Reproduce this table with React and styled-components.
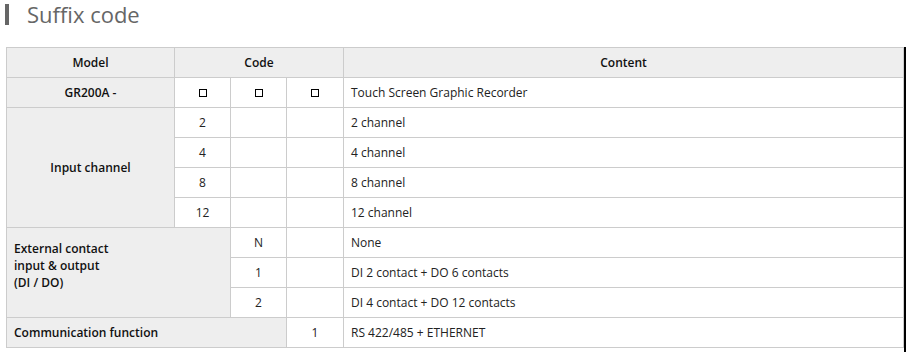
import React from "react";
import styled, { createGlobalStyle } from "styled-components";

const Global = createGlobalStyle`
  html, body { margin: 0; padding: 0; background: #fff; }
  body { font-family: "Open Sans", "Noto Sans", sans-serif; }
`;

const Page = styled.div`
  width: 914px;
  height: 352px;
  overflow: hidden;
  box-sizing: border-box;
  padding: 0 0 0 6px;
`;

const Title = styled.h2`
  margin: 0 0 0 -1px;
  height: 47px;
  box-sizing: border-box;
  display: flex;
  align-items: flex-start;
  gap: 18px;
  font-family: "Open Sans", sans-serif;
  font-weight: 500;
  font-size: 22px;
  line-height: 29px;
  color: #666;
`;

const TitleBar = styled.span`
  display: block;
  flex: 0 0 4px;
  width: 4px;
  height: 21px;
  margin-top: 4px;
  background: #666;
`;

const Frame = styled.div`
  width: 900px;
  height: 305px;
  box-sizing: border-box;
  border-right: 2px solid #000;
`;

const Table = styled.table`
  width: 898px;
  border-collapse: collapse;
  table-layout: fixed;
  font-family: "Open Sans", sans-serif;
  font-size: 12px;
  color: #222;
  border-top: 1px solid #ccc;
`;

const Cell = styled.td`
  height: 30px;
  box-sizing: border-box;
  border: 1px solid #ccc;
  padding: 0;
  padding-left: ${(p) => (p.$left ? "7px" : "0")};
  text-align: ${(p) => (p.$left ? "left" : "center")};
  vertical-align: middle;
  background: ${(p) => (p.$gray ? "#eeeeee" : "#fff")};
  font-weight: ${(p) => (p.$bold ? 600 : 400)};
  color: ${(p) => (p.$bold ? "#111" : "#222")};
  line-height: ${(p) => (p.$tall ? "17px" : "16px")};
`;

const Head = styled(Cell).attrs({ as: "th" })`
  background: #eeeeee;
  font-weight: 600;
  color: #111;
`;

const Box = styled.span`
  display: inline-block;
  width: 8px;
  height: 8px;
  box-sizing: border-box;
  border: 1px solid #000;
  vertical-align: middle;
`;

const Top = styled.span`
  display: block;
  padding-bottom: 15px;
`;

export default function App() {
  return (
    <>
      <Global />
      <Page>
        <Title>
          <TitleBar />
          Suffix code
        </Title>
        <Frame>
          <Table>
            <colgroup>
              <col style={{ width: 168 }} />
              <col style={{ width: 56 }} />
              <col style={{ width: 56 }} />
              <col style={{ width: 57 }} />
              <col />
            </colgroup>
            <thead>
              <tr>
                <Head>Model</Head>
                <Head colSpan={3}>Code</Head>
                <Head>Content</Head>
              </tr>
            </thead>
            <tbody>
              <tr>
                <Cell $gray $bold>GR200A -</Cell>
                <Cell><Box aria-label="□" /></Cell>
                <Cell><Box aria-label="□" /></Cell>
                <Cell><Box aria-label="□" /></Cell>
                <Cell $left>Touch Screen Graphic Recorder</Cell>
              </tr>
              <tr>
                <Cell $gray $bold rowSpan={4}>Input channel</Cell>
                <Cell>2</Cell>
                <Cell />
                <Cell />
                <Cell $left>2 channel</Cell>
              </tr>
              <tr>
                <Cell>4</Cell>
                <Cell />
                <Cell />
                <Cell $left>4 channel</Cell>
              </tr>
              <tr>
                <Cell>8</Cell>
                <Cell />
                <Cell />
                <Cell $left>8 channel</Cell>
              </tr>
              <tr>
                <Cell>12</Cell>
                <Cell />
                <Cell />
                <Cell $left>12 channel</Cell>
              </tr>
              <tr>
                <Cell $gray $bold $left $tall colSpan={2} rowSpan={3}>
                  <Top>
                    External contact
                    <br />
                    input &amp; output
                    <br />
                    (DI / DO)
                  </Top>
                </Cell>
                <Cell>N</Cell>
                <Cell />
                <Cell $left>None</Cell>
              </tr>
              <tr>
                <Cell>1</Cell>
                <Cell />
                <Cell $left>DI 2 contact + DO 6 contacts</Cell>
              </tr>
              <tr>
                <Cell>2</Cell>
                <Cell />
                <Cell $left>DI 4 contact + DO 12 contacts</Cell>
              </tr>
              <tr>
                <Cell $gray $bold $left colSpan={3}>Communication function</Cell>
                <Cell>1</Cell>
                <Cell $left>RS 422/485 + ETHERNET</Cell>
              </tr>
            </tbody>
          </Table>
        </Frame>
      </Page>
    </>
  );
}
